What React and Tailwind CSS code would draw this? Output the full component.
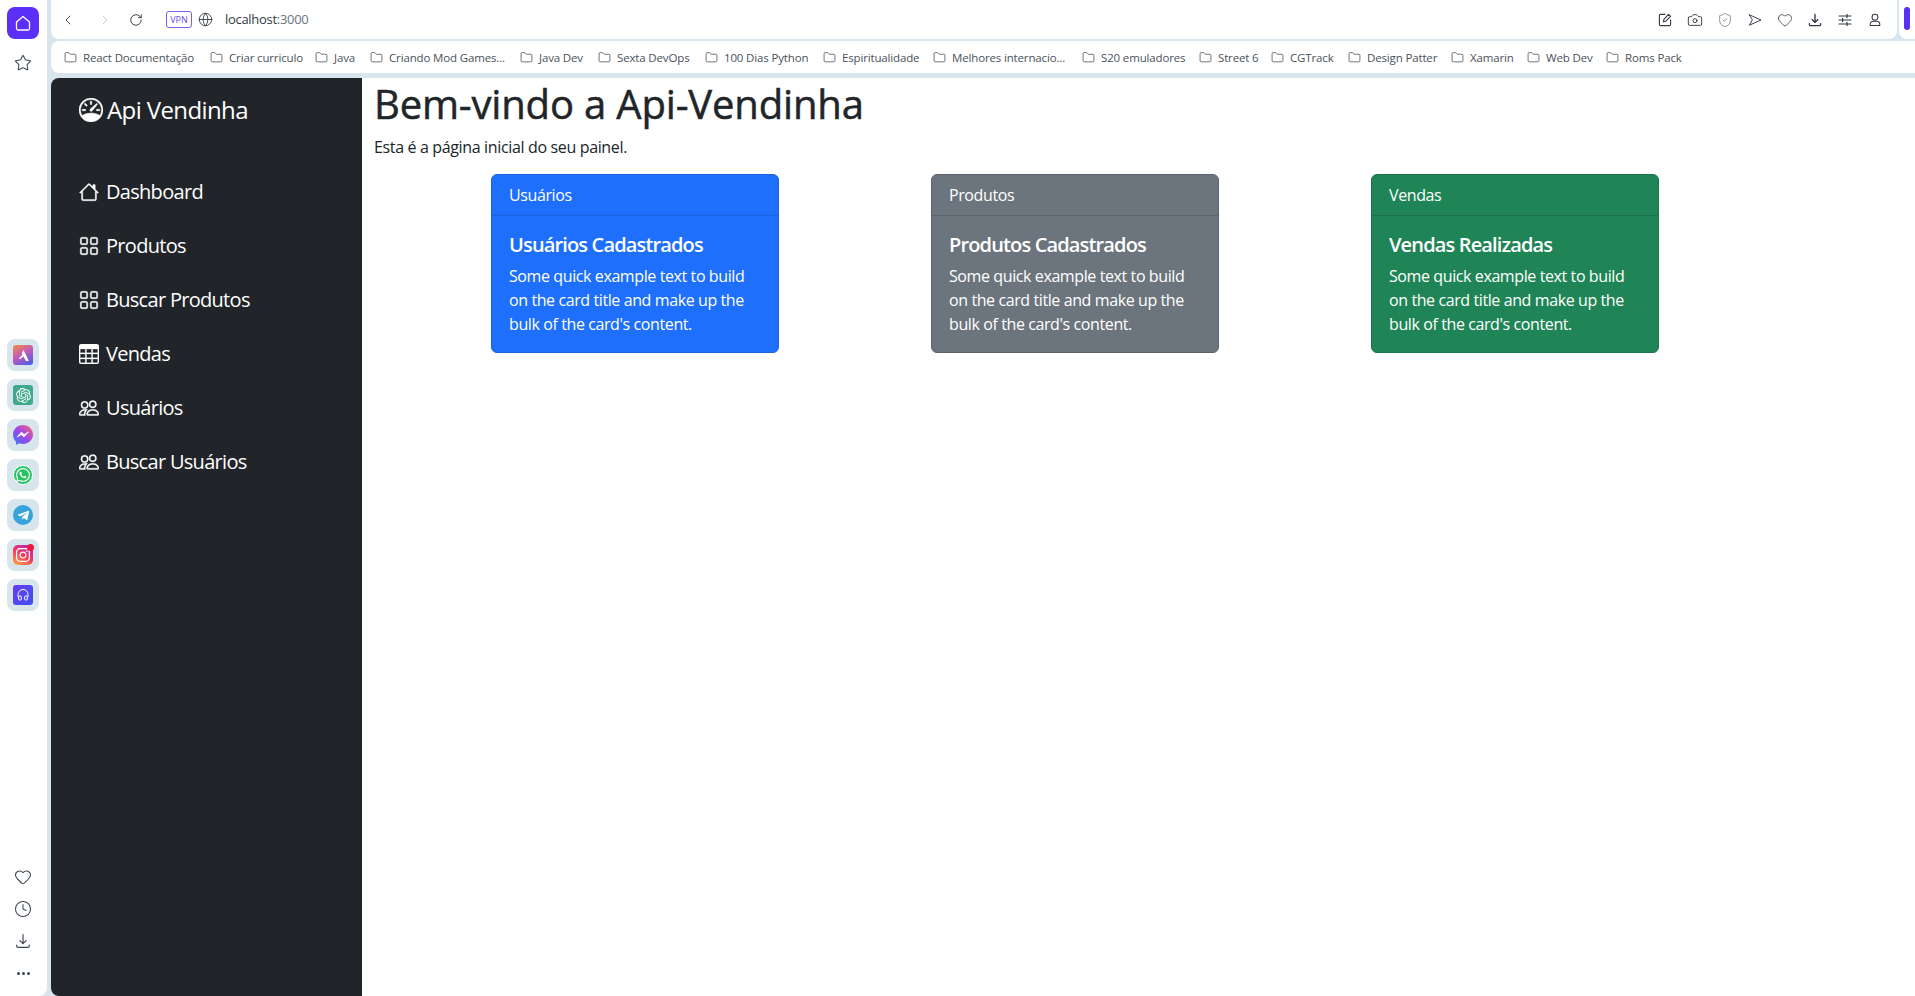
import React from 'react';
import { BsSpeedometer, BsHouse, BsGrid, BsTable, BsPeople } from 'react-icons/bs';
import { ChevronLeft, ChevronRight, RotateCw, Globe, Folder, Star, Heart, Clock, Camera, ShieldCheck } from 'lucide-react';
import { SiOpenai } from 'react-icons/si';
import { FaWhatsapp, FaTelegramPlane, FaInstagram } from 'react-icons/fa';

const bookmarks = [
    ['React Documentação', 'w-[146px]'],
    ['Criar curriculo', 'w-[105px]'],
    ['Java', 'w-[55px]'],
    ['Criando Mod Games...', 'w-[150px]'],
    ['Java Dev', 'w-[78px]'],
    ['Sexta DevOps', 'w-[107px]'],
    ['100 Dias Python', 'w-[118px]'],
    ['Espiritualidade', 'w-[110px]'],
    ['Melhores internacio...', 'w-[149px]'],
    ['S20 emuladores', 'w-[117px]'],
    ['Street 6', 'w-[72px]'],
    ['CGTrack', 'w-[77px]'],
    ['Design Patter', 'w-[103px]'],
    ['Xamarin', 'w-[76px]'],
    ['Web Dev', 'w-[79px]'],
    ['Roms Pack', 'w-[90px]'],
];

const navItems = [
    { label: 'Dashboard', icon: <BsHouse size={20} stroke="currentColor" strokeWidth={0.3} /> },
    { label: 'Produtos', icon: <BsGrid size={20} stroke="currentColor" strokeWidth={0.3} /> },
    { label: 'Buscar Produtos', icon: <BsGrid size={20} stroke="currentColor" strokeWidth={0.3} /> },
    { label: 'Vendas', icon: <BsTable size={20} stroke="currentColor" strokeWidth={0.2} /> },
    { label: 'Usuários', icon: <BsPeople size={20} stroke="currentColor" strokeWidth={0.3} /> },
    { label: 'Buscar Usuários', icon: <BsPeople size={20} stroke="currentColor" strokeWidth={0.3} /> },
];

const cards = [
    { head: 'Usuários', title: 'Usuários Cadastrados', bg: 'bg-[#1e6ffb]', border: 'border-[#1a62de]' },
    { head: 'Produtos', title: 'Produtos Cadastrados', bg: 'bg-[#6c757d]', border: 'border-[#5c646b]' },
    { head: 'Vendas', title: 'Vendas Realizadas', bg: 'bg-[#1f8556]', border: 'border-[#1a7349]' },
];

// icones do navegador que nao existem iguais nos pacotes
const Glyph = ({ size = 16, width = 1.4, className, children }) => (
    <svg width={size} height={size} viewBox="0 0 20 20" fill="none" stroke="currentColor" strokeWidth={width} strokeLinecap="round" strokeLinejoin="round" className={className}>
        {children}
    </svg>
);

const Tray = ({ size, width }) => (
    <Glyph size={size} width={width}>
        <path d="M10 3v10M6.500 9.500 10 13l3.500-3.500M3 14.500v1a1.500 1.500 0 0 0 1.500 1.500h11a1.500 1.500 0 0 0 1.500-1.500v-1" />
    </Glyph>
);

const Tile = ({ children }) => (
    <div className="w-8 h-8 rounded-lg bg-[#d8e5ec] flex items-center justify-center">{children}</div>
);

const Rail = () => (
    <aside className="w-[47px] shrink-0 bg-white rounded-br-lg flex flex-col items-center pr-[1px] pt-[7px] pb-[14px]">
        <div className="w-8 h-8 rounded-lg bg-[#5b2ff6] flex items-center justify-center text-white">
            <Glyph size={20} width={1.3}>
                <path d="M3.500 9 10 3.500 16.500 9v6.500a1.500 1.500 0 0 1-1.500 1.500H5a1.500 1.500 0 0 1-1.500-1.500Z" />
            </Glyph>
        </div>
        <Star size={18} strokeWidth={1.4} className="mt-[15px] text-[#3c4650]" />
        <div className="mt-[267px] flex flex-col gap-2">
            <Tile>
                <div className="w-5 h-5 rounded-[3px] bg-[linear-gradient(150deg,#f58a3c,#c45cb8_45%,#3b5cf0)] flex items-center justify-center">
                    <svg width="13" height="13" viewBox="0 0 12 12"><path d="M6 1 7.800 4.600 11 11H8.300L6 7 2.800 9.500 1.800 8.500 4.800 5.500 4.500 3.800Z" fill="white" /></svg>
                </div>
            </Tile>
            <Tile>
                <div className="w-5 h-5 rounded-[3px] bg-[#41a98d] flex items-center justify-center text-white"><SiOpenai size={15} /></div>
            </Tile>
            <Tile>
                <svg width="20" height="20" viewBox="0 0 20 20">
                    <defs>
                        <linearGradient id="messenger" x1="0" y1="1" x2="1" y2="0">
                            <stop offset="0" stopColor="#2f7bf5" />
                            <stop offset="0.5" stopColor="#a045e8" />
                            <stop offset="1" stopColor="#fb6a72" />
                        </linearGradient>
                    </defs>
                    <path d="M10 0C4.400 0 0 4.100 0 9.600c0 2.900 1.200 5.400 3.100 7.100V20l3-1.700c1.200.4 2.500.6 3.900.6 5.600 0 10-4.100 10-9.400S15.600 0 10 0Z" fill="url(#messenger)" />
                    <path d="M4 12 8.500 7l2.500 2.500L15.500 7 11 12 8.500 9.700Z" fill="white" stroke="white" strokeWidth="0.6" strokeLinejoin="round" />
                </svg>
            </Tile>
            <Tile>
                <div className="w-5 h-5 rounded-full bg-[#25c463] border border-white flex items-center justify-center text-white"><FaWhatsapp size={16} /></div>
            </Tile>
            <Tile>
                <div className="w-5 h-5 rounded-full bg-[#37a3dd] flex items-center justify-center text-white"><FaTelegramPlane size={13} /></div>
            </Tile>
            <Tile>
                <div className="relative w-5 h-5 rounded-[5px] bg-[linear-gradient(30deg,#fcb045,#f5365c_50%,#a32cd8)] flex items-center justify-center text-white">
                    <FaInstagram size={16} />
                    <span className="absolute -top-[1px] -right-[1px] w-[7px] h-[7px] rounded-full bg-[#f0193c]" />
                </div>
            </Tile>
            <Tile>
                <div className="w-5 h-5 rounded-[3px] bg-[linear-gradient(135deg,#6a3cf0,#3c50f0)] flex items-center justify-center text-white">
                    <svg width="14" height="14" viewBox="0 0 14 14" fill="none" stroke="white" strokeWidth="1"><path d="M2 9 V6.500 a5 5 0 0 1 10 0 V9" /><ellipse cx="4" cy="10" rx="1.500" ry="2.200" /><ellipse cx="10" cy="10" rx="1.500" ry="2.200" /></svg>
                </div>
            </Tile>
        </div>
        <div className="mt-auto flex flex-col items-center gap-[14px] text-[#3c4650]">
            <Heart size={18} strokeWidth={1.4} />
            <Clock size={18} strokeWidth={1.4} />
            <Tray size={18} width={1.3} />
            <div className="flex gap-[2px] h-[18px] items-center">
                <span className="w-[3px] h-[3px] rounded-full bg-[#3c4650]" />
                <span className="w-[3px] h-[3px] rounded-full bg-[#3c4650]" />
                <span className="w-[3px] h-[3px] rounded-full bg-[#3c4650]" />
            </div>
        </div>
    </aside>
);

const TopBar = () => (
    <div className="flex gap-[2px] h-[39px]">
        <div className="flex-1 bg-white rounded-b-lg flex items-center text-[#333b44]">
            <ChevronLeft size={16} strokeWidth={1.4} className="ml-[9px]" />
            <ChevronRight size={16} strokeWidth={1.4} className="ml-[21px] text-[#c4ccd2]" />
            <RotateCw size={14} strokeWidth={1.6} className="ml-[16px]" />
            <span className="ml-[23px] w-[26px] h-[17px] rounded-[3px] border border-[#7a5cf5] text-[#6a4cf0] text-[9px] leading-none flex items-center justify-center">VPN</span>
            <Globe size={15} strokeWidth={1.4} className="ml-[6px]" />
            <span className="ml-[12px] text-[13px] tracking-[-0.3px] text-[#333b44]">localhost<span className="text-[#6c757d]">:3000</span></span>
            <div className="ml-auto mr-[14px] flex gap-[14px] text-[#333b44]">
                <Glyph>
                    <path d="M10 3H4.500A1.500 1.500 0 0 0 3 4.500v11A1.500 1.500 0 0 0 4.500 17h11a1.500 1.500 0 0 0 1.500-1.500V10" />
                    <path d="M8 12l.8-3L14.500 3l2.500 2.500-6 6Z" />
                </Glyph>
                <Camera size={16} strokeWidth={1.4} />
                <ShieldCheck size={16} strokeWidth={1.3} className="text-[#7a838c]" />
                <Glyph width={1.2}><path d="M3 3.500 17.500 10 3 16.500 6.500 10Z" /></Glyph>
                <Heart size={16} strokeWidth={1.2} />
                <Tray size={16} width={1.7} />
                <Glyph width={1.5}>
                    <path d="M2.500 5h15M2.500 10h15M2.500 15h15M12.500 3v4M7 8v4M12.500 13v4" />
                </Glyph>
                <Glyph width={1.3}>
                    <circle cx="10" cy="6.500" r="3.700" />
                    <path d="M4 17v-1.500a4 4 0 0 1 4-4h4a4 4 0 0 1 4 4V17Z" />
                </Glyph>
            </div>
        </div>
        <div className="w-4 bg-white rounded-bl-lg pt-[7px] pl-[5px]">
            <div className="w-[6px] h-[23px] rounded-full bg-[#5b2ff6]" />
        </div>
    </div>
);

const BookmarkBar = () => (
    <div className="mt-[2px] h-[32px] bg-white rounded-l-lg flex items-center pl-[13px] pt-[1px]">
        {bookmarks.map(([name, width]) => (
            <div key={name} className={`${width} shrink-0 flex items-center gap-[6px] text-[#4a525a]`}>
                <Folder size={13} strokeWidth={1.3} className="shrink-0 text-[#333b44]" />
                <span className="text-[11.5px] tracking-[-0.15px] whitespace-nowrap">{name}</span>
            </div>
        ))}
    </div>
);

const Sidebar = () => (
    <aside className="w-[311px] shrink-0 bg-[#212529] rounded-l-lg text-white pl-[28px] pt-[17px]">
        <div className="flex items-center gap-[4px] h-[30px] text-[24px] tracking-[-0.6px]">
            <BsSpeedometer size={24} stroke="currentColor" strokeWidth={0.3} />
            <span>Api Vendinha</span>
        </div>
        <nav className="mt-[45px] flex flex-col gap-[10px]">
            {navItems.map(item => (
                <a key={item.label} className="flex items-center gap-[7px] h-[44px] text-[20px] tracking-[-0.7px]">
                    {item.icon}
                    <span>{item.label}</span>
                </a>
            ))}
        </nav>
    </aside>
);

const Card = ({ head, title, bg, border }) => (
    <div className={`${bg} ${border} w-[288px] mx-auto h-[179px] border rounded-md text-white`}>
        <div className={`${border} h-[41px] border-b px-[17px] flex items-center text-[16px] tracking-[-0.4px]`}>{head}</div>
        <div className="px-[17px] pt-[17px]">
            <h5 className="text-[20px] leading-6 font-semibold tracking-[-0.85px] mb-[7px]">{title}</h5>
            <p className="text-[16px] leading-6 tracking-[-0.4px]">Some quick example text to build on the card title and make up the bulk of the card's content.</p>
        </div>
    </div>
);

export default function App() {
    return (
        <div className="flex h-[996px] overflow-hidden bg-[#d8e5ec] font-['Open_Sans',sans-serif] text-[#212529]">
            <Rail />
            <div className="flex-1 ml-[4px] flex flex-col min-w-0">
                <TopBar />
                <BookmarkBar />
                <div className="mt-[5px] flex-1 flex min-h-0">
                    <Sidebar />
                    <main className="flex-1 bg-white px-3">
                        <h1 className="text-[40px] leading-[48px] font-medium tracking-[-0.17px] [-webkit-text-stroke:0.5px_#212529] mb-[7px] mt-[2px]">Bem-vindo a Api-Vendinha</h1>
                        <p className="text-[16px] leading-6 tracking-[-0.35px] mb-[15px]">Esta é a página inicial do seu painel.</p>
                        <div className="grid grid-cols-3 w-[1320px] ml-[41px]">
                            {cards.map(card => <Card key={card.head} {...card} />)}
                        </div>
                    </main>
                </div>
            </div>
        </div>
    );
}
